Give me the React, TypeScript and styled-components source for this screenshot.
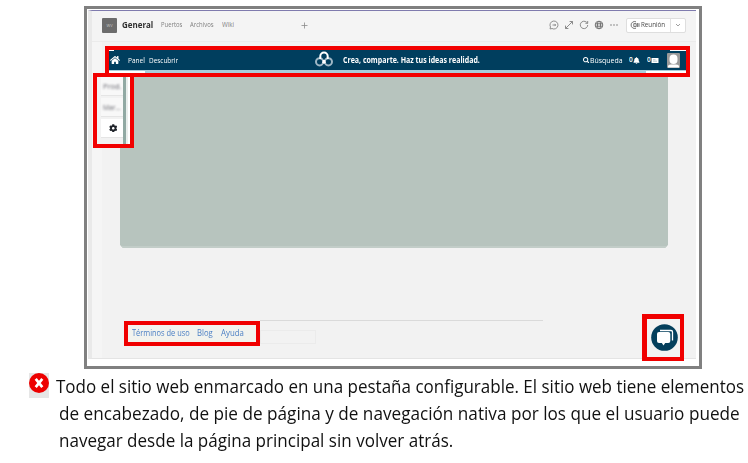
import React, { useLayoutEffect, useRef, useState } from "react";
import styled, { createGlobalStyle } from "styled-components";
import { FaHome, FaSearch, FaBell, FaCog } from "react-icons/fa";

const Global = createGlobalStyle`
  * { box-sizing: border-box; }
  body { margin: 0; background: #fff; overflow: hidden; font-family: "Open Sans", "Noto Sans", sans-serif; }
`;

const Label = styled.span<{ $size: number; $color?: string; $weight?: number; $gap?: number; $width: number }>`
  display: block;
  flex: none;
  width: ${(p) => p.$width}px;
  margin-left: ${(p) => p.$gap ?? 0}px;
  overflow-x: clip;
  font-size: ${(p) => p.$size}px;
  line-height: 1.4;
  color: ${(p) => p.$color ?? "inherit"};
  font-weight: ${(p) => p.$weight ?? 400};
  white-space: nowrap;
`;

const Stretch = styled.span`
  display: inline-block;
  transform-origin: 0 50%;
`;

type FitProps = { text: string; width: number; size: number; color?: string; weight?: number; gap?: number };

/* Condenses or widens a single line to the given width. */
function FitText({ text, width, size, color, weight, gap }: FitProps) {
  const ref = useRef<HTMLSpanElement>(null);
  const [scale, setScale] = useState(1);
  useLayoutEffect(() => {
    setScale(width / ref.current!.offsetWidth);
  }, [text, width]);
  return (
    <Label $size={size} $color={color} $weight={weight} $gap={gap} $width={width}>
      <Stretch ref={ref} style={{ transform: `scaleX(${scale})` }}>{text}</Stretch>
    </Label>
  );
}

const Page = styled.main`
  width: 748px;
  height: 463px;
  padding-top: 6px;
`;

const Frame = styled.section`
  position: relative;
  width: 618px;
  height: 363px;
  margin-left: 84px;
  padding: 1px 3px 0 1px;
  border: 3px solid #808080;
  background: #fff;
`;

const Screen = styled.div`
  height: 349px;
  display: flex;
  flex-direction: column;
  border-top: 1px solid #7f7bae;
  border-left: 4px solid #e9e9e9;
  border-bottom: 1px solid #e4e4e4;
  background: linear-gradient(90deg, #f5f5f5 10px, #f2f2f2 10px);
`;

const TabBar = styled.header`
  display: flex;
  align-items: center;
  height: 31px;
  flex: none;
  padding: 0 10px 2px;
  background: #f4f4f4;
  border-bottom: 1px solid #ebebeb;
`;

const TeamIcon = styled.div`
  width: 15px;
  height: 15px;
  flex: none;
  margin-right: 5px;
  display: flex;
  align-items: center;
  justify-content: center;
  border-radius: 1px;
  background: #6c6c6c;
  color: #c4c4c4;
  font-size: 4px;
`;

const Plus = styled.svg`
  width: 7px;
  height: 7px;
  margin-left: 67px;
  flex: none;
`;

const Tools = styled.div`
  margin-left: auto;
  display: flex;
  align-items: center;
  gap: 5px;
  svg { width: 10px; height: 10px; display: block; flex: none; }
`;

const MeetButton = styled.div`
  display: flex;
  align-items: center;
  height: 15px;
  width: 60px;
  margin-left: 2px;
  padding-left: 3px;
  border: 1px solid #dedede;
  border-radius: 2px;
  background: #fff;
`;

const MeetArrow = styled.span`
  display: flex;
  align-items: center;
  justify-content: center;
  margin-left: auto;
  width: 15px;
  height: 13px;
  border-left: 1px solid #e2e2e2;
  && svg { width: 6px; height: 6px; }
`;

const NavBar = styled.nav`
  display: flex;
  align-items: center;
  flex: none;
  width: 585px;
  height: 31px;
  margin: 4px 0 0 13px;
  padding: 0 0 3px 1px;
  border: 4px solid #f20000;
  color: #fff;
  background:
    linear-gradient(#fff, #fff) 100% 0 / 16px 1px no-repeat padding-box,
    linear-gradient(#fff, #fff) 0 0 / 5px 1px no-repeat padding-box,
    linear-gradient(#fff, #fff) 0 100% / 36px 2px no-repeat padding-box,
    linear-gradient(#fff, #fff) 100% 100% / 40px 2px no-repeat padding-box,
    linear-gradient(#a9cdda, #a9cdda) 0 100% / 100% 3px no-repeat padding-box,
    #003e5e;
`;

const HomeMark = styled(FaHome)`
  width: 10px;
  height: 10px;
  flex: none;
  margin-right: 7.5px;
`;

const Logo = styled.svg`
  width: 20px;
  height: 16px;
  flex: none;
  margin: -3px 0 0 136px;
`;

const NavRight = styled.div`
  display: flex;
  align-items: center;
  margin-left: auto;
  padding-right: 6px;
  svg { flex: none; }
`;

const Avatar = styled.svg`
  width: 13px;
  height: 15px;
  margin-left: 8px;
`;

const Hero = styled.div`
  flex: none;
  width: 548px;
  height: 171px;
  margin-left: 28px;
  background: #b7c4be;
  border-bottom: 2px solid #c2cdc8;
  clip-path: polygon(0 0, 100% 0, 100% 168px, 545px 100%, 3px 100%, 0 168px);
`;

const Footer = styled.footer`
  display: flex;
  align-items: flex-start;
  margin: 73px 0 0 32px;
`;

const FooterLinks = styled.div`
  display: flex;
  align-items: center;
  width: 136px;
  height: 25px;
  padding: 0 0 1px 4px;
  border: 4px solid #f00000;
  background: #f2f3ee;
  color: #4a7fc4;
`;

const FooterRule = styled.div`
  width: 283px;
  height: 1px;
  background: #dadada;
`;

const FooterSlot = styled.div`
  width: 56px;
  height: 14px;
  margin: 9px 0 0;
  border: 1px solid #ebebeb;
`;

const FooterRest = styled.div`
  width: 283px;
  margin-top: -1px;
`;

const SideMark = styled.aside`
  position: absolute;
  left: 6px;
  top: 64px;
  width: 41px;
  height: 75px;
  border: 4px solid #f20000;
  background: linear-gradient(90deg, #f2f2f2 26px, #91a9a3 26px, #91a9a3 29px, #e9eeec 29px, #e9eeec 31px, #fff 31px) padding-box;
`;

const SideTiles = styled.div`
  display: flex;
  flex-direction: column;
  gap: 2px;
  width: 22px;
  margin-left: 4px;
`;

const Tile = styled.div<{ $blur?: boolean }>`
  height: 19px;
  display: flex;
  align-items: center;
  justify-content: ${(p) => (p.$blur ? "flex-start" : "center")};
  overflow: hidden;
  padding-left: 2px;
  background: ${(p) => (p.$blur ? "#f8f8f8" : "#fff")};
  border-bottom: 1px solid #e5e5e5;
  color: ${(p) => (p.$blur ? "#66666e" : "#20242b")};
  > span { filter: blur(1px); }
`;

const ChatMark = styled.div`
  position: absolute;
  right: 15px;
  bottom: 5px;
  width: 42px;
  height: 47px;
  display: flex;
  align-items: center;
  justify-content: center;
  border: 5px solid #f00000;
  border-width: 5px 4px 4px 5px;
  background: #f2f2f2;
  svg { width: 27px; height: 27px; margin: -1px 0 0 2px; }
`;

const Caption = styled.section`
  display: flex;
  margin-top: 4px;
  padding-left: 29px;
  color: #111;
`;

const ErrorIcon = styled.div`
  width: 20px;
  height: 25px;
  flex: none;
  background: #e6e6e6;
  svg { display: block; }
`;

const Lines = styled.div`
  display: flex;
  flex-direction: column;
  padding-left: 7px;
  > span { line-height: 27px; height: 27px; }
`;

export default function App() {
  return (
    <Page>
      <Global />
      <Frame>
        <Screen>
          <TabBar>
            <TeamIcon>WV</TeamIcon>
            <FitText text="General" width={31} size={9} weight={700} color="#303030" />
            <FitText text="Puertos" width={21} size={6.2} gap={8} color="#808080" />
            <FitText text="Archivos" width={24} size={6.2} gap={8} color="#808080" />
            <FitText text="Wiki" width={12} size={6.2} gap={8} color="#808080" />
            <Plus viewBox="0 0 7 7"><path d="M3.5.5v6M.5 3.5h6" stroke="#8a8a8a" strokeWidth=".8" /></Plus>
            <Tools>
              <svg viewBox="0 0 10 10" fill="none" stroke="#858585" strokeWidth=".9">
                <path d="M2 8.8H1L1.5 7A4 4 0 1 1 3 8.5ZM3.5 5h3.2M5.6 3.9 6.7 5 5.6 6.1" />
              </svg>
              <svg viewBox="0 0 10 10" fill="none" stroke="#808080" strokeWidth=".9">
                <path d="M1.5 8.5l7-7M5.6 1.5h2.9v2.9M1.5 5.6v2.9h2.9" />
              </svg>
              <svg viewBox="0 0 10 10" fill="none" stroke="#808080" strokeWidth=".9">
                <path d="M8.7 5A3.7 3.7 0 1 1 7.5 2.2L8.6 3.2M8.7 1v2.3H6.4" />
              </svg>
              <svg viewBox="0 0 10 10" fill="none" stroke="#747474" strokeWidth="1">
                <circle cx="5" cy="5" r="3.8" /><ellipse cx="5" cy="5" rx="1.6" ry="3.8" /><path d="M1.2 3.8h7.6M1.2 6.2h7.6" />
              </svg>
              <svg viewBox="0 0 10 10" fill="#808080">
                <circle cx="2" cy="5" r=".8" /><circle cx="5" cy="5" r=".8" /><circle cx="8" cy="5" r=".8" />
              </svg>
              <MeetButton>
                <svg viewBox="0 0 10 10" fill="none" stroke="#666" strokeWidth=".9">
                  <path d="M6 1.8A3.5 3.5 0 1 0 6 8.2M3.8 3.6h2.4v3H3.8zM7.6 3v4M9 3.2v3.6" />
                </svg>
                <FitText text="Reunión" width={24} size={7} gap={1} color="#484848" weight={500} />
                <MeetArrow>
                  <svg viewBox="0 0 6 6" fill="none" stroke="#888" strokeWidth=".8"><path d="M1 2l2 2 2-2" /></svg>
                </MeetArrow>
              </MeetButton>
            </Tools>
          </TabBar>

          <NavBar>
            <HomeMark />
            <FitText text="Panel" width={17} size={7.3} />
            <FitText text="Descubrir" width={29} size={7.3} gap={4} />
            <Logo viewBox="0 0 20 16" fill="none" strokeWidth="2">
              <circle cx="5.6" cy="10.8" r="3.6" stroke="#9fb7c5" />
              <circle cx="14.4" cy="10.8" r="3.6" stroke="#9fb7c5" />
              <path d="M6.3 8V5.2a3.7 3.7 0 0 1 7.4 0V8M8.8 9.4l2.4 2.8M11.2 9.4l-2.4 2.8" stroke="#fff" />
            </Logo>
            <FitText text="Crea, comparte. Haz tus ideas realidad." width={137} size={8} weight={700} gap={9.5} />
            <NavRight>
              <FaSearch size={6.5} />
              <FitText text="Búsqueda" width={33} size={7.6} gap={1} />
              <FitText text="0" width={4} size={6.5} gap={6} weight={600} />
              <FaBell size={7} />
              <FitText text="0" width={4} size={6.5} gap={7} weight={600} />
              <svg width="8" height="7" viewBox="0 0 8 7"><path d="M.5 1h7v5h-7z" fill="#fff" /><path d="M2 2.7h2.5M2 4.2h4" stroke="#8aa2af" strokeWidth=".6" /></svg>
              <Avatar viewBox="0 0 13 15">
                <rect width="13" height="15" rx="1" fill="#999" />
                <path d="M2.5 5.5a4 4 0 0 1 8 0v1.5a4 4 0 0 1-8 0zM1 14.5v-1q0-1.8 3-2h5q3 .2 3 2v1z" fill="#fff" />
              </Avatar>
            </NavRight>
          </NavBar>

          <Hero />

          <Footer>
            <FooterLinks>
              <FitText text="Términos de uso" width={58} size={8.2} />
              <FitText text="Blog" width={16} size={8.2} gap={7} />
              <FitText text="Ayuda" width={23} size={8.2} gap={7.5} />
            </FooterLinks>
            <FooterRest>
              <FooterRule />
              <FooterSlot />
            </FooterRest>
          </Footer>
        </Screen>

        <SideMark>
          <SideTiles>
            <Tile $blur><FitText text="Prod." width={18} size={7.8} /></Tile>
            <Tile $blur><FitText text="Mar..." width={18} size={7.8} /></Tile>
            <Tile><FaCog size={8.5} /></Tile>
          </SideTiles>
        </SideMark>

        <ChatMark>
          <svg viewBox="0 0 27 27">
            <circle cx="13.5" cy="13.5" r="13.3" fill="#043f5c" />
            <path d="M9 6.5h11q1.5 0 1.5 1.5v8.5" fill="none" stroke="#fff" strokeWidth="1.3" />
            <rect x="6" y="8" width="13.3" height="11" rx="2" fill="#fff" />
            <path d="M10.5 18.5h4l-2 3z" fill="#fff" />
          </svg>
        </ChatMark>
      </Frame>

      <Caption>
        <ErrorIcon>
          <svg width="20" height="20" viewBox="0 0 20 20">
            <circle cx="10" cy="10" r="10" fill="#ed0000" />
            <path d="M6.7 5.8l6.6 8.4M13.3 5.8l-6.6 8.4" stroke="#fff" strokeWidth="2.7" />
          </svg>
        </ErrorIcon>
        <Lines>
          <FitText text="Todo el sitio web enmarcado en una pestaña configurable. El sitio web tiene elementos" width={688} size={17.7} />
          <FitText text="de encabezado, de pie de página y de navegación nativa por los que el usuario puede" width={681} size={17.7} gap={2.5} />
          <FitText text="navegar desde la página principal sin volver atrás." width={394} size={17.7} gap={2.5} />
        </Lines>
      </Caption>
    </Page>
  );
}
